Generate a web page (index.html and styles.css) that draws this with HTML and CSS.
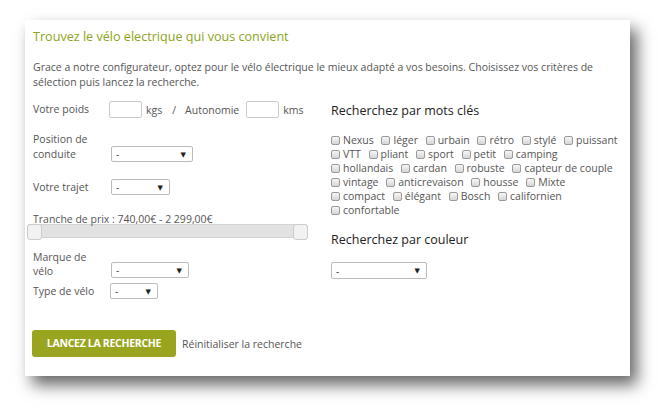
FILE: index.html
```html
<!DOCTYPE html>
<html lang="fr">
<head>
<meta charset="utf-8">
<link rel="stylesheet" href="styles.css">
</head>
<body>
<div class="card">
  <h1 class="title">Trouvez le vélo electrique qui vous convient</h1>
  <p class="intro">Grace a notre configurateur, optez pour le vélo électrique le mieux adapté a vos besoins. Choisissez vos critères de sélection puis lancez la recherche.</p>
  <div class="cols">
    <div class="left">
      <div class="row row-poids">
        <span class="label">Votre poids</span>
        <span class="input"></span><span class="unit">kgs</span>
        <span class="slash">/</span>
        <span class="auto">Autonomie</span>
        <span class="input"></span><span class="unit">kms</span>
      </div>
      <div class="row row-pos">
        <span class="label">Position de<br>conduite</span>
        <span class="select w82"><span>-</span><span class="arrow">▼</span></span>
      </div>
      <div class="row row-trajet">
        <span class="label">Votre trajet</span>
        <span class="select w59"><span>-</span><span class="arrow">▼</span></span>
      </div>
      <div class="price">Tranche de prix : 740,00€ - 2 299,00€</div>
      <div class="slider"><span class="handle"></span><span class="handle"></span></div>
      <div class="row row-marque">
        <span class="label lh14">Marque de<br>vélo</span>
        <span class="select w78"><span>-</span><span class="arrow">▼</span></span>
      </div>
      <div class="row row-type">
        <span class="label">Type de vélo</span>
        <span class="select w48"><span>-</span><span class="arrow">▼</span></span>
      </div>
      <div class="actions">
        <span class="btn">LANCEZ LA RECHERCHE</span>
        <span class="reset">Réinitialiser la recherche</span>
      </div>
    </div>
    <div class="right">
      <h2 class="sub">Recherchez par mots clés</h2>
      <div class="tags">
        <span class="tag"><i class="cb"></i>Nexus</span>
        <span class="tag"><i class="cb"></i>léger</span>
        <span class="tag"><i class="cb"></i>urbain</span>
        <span class="tag"><i class="cb"></i>rétro</span>
        <span class="tag"><i class="cb"></i>stylé</span>
        <span class="tag"><i class="cb"></i>puissant</span>
        <span class="tag"><i class="cb"></i>VTT</span>
        <span class="tag"><i class="cb"></i>pliant</span>
        <span class="tag"><i class="cb"></i>sport</span>
        <span class="tag"><i class="cb"></i>petit</span>
        <span class="tag"><i class="cb"></i>camping</span>
        <span class="tag"><i class="cb"></i>hollandais</span>
        <span class="tag"><i class="cb"></i>cardan</span>
        <span class="tag"><i class="cb"></i>robuste</span>
        <span class="tag"><i class="cb"></i>capteur de couple</span>
        <span class="tag"><i class="cb"></i>vintage</span>
        <span class="tag"><i class="cb"></i>anticrevaison</span>
        <span class="tag"><i class="cb"></i>housse</span>
        <span class="tag"><i class="cb"></i>Mixte</span>
        <span class="tag"><i class="cb"></i>compact</span>
        <span class="tag"><i class="cb"></i>élégant</span>
        <span class="tag"><i class="cb"></i>Bosch</span>
        <span class="tag"><i class="cb"></i>californien</span>
        <span class="tag"><i class="cb"></i>confortable</span>
      </div>
      <h2 class="sub sub2">Recherchez par couleur</h2>
      <span class="select w95"><span>-</span><span class="arrow">▼</span></span>
    </div>
  </div>
</div>
</body>
</html>
```

FILE: styles.css
```css
html, body {
  margin: 0;
  padding: 0;
  background: #ffffff;
}

body {
  font-family: "Open Sans", "DejaVu Sans", sans-serif;
  font-size: 10.5px;
  color: #555555;
  width: 668px;
  height: 412px;
  overflow: hidden;
}

.card {
  margin: 20px 0 0 25px;
  width: 605px;
  height: 356px;
  box-sizing: border-box;
  padding: 9px 8px 0 8px;
  background: #ffffff;
  box-shadow: 7px 9px 15px rgba(0, 0, 0, 0.6);
}

.title {
  margin: 0;
  font-size: 12.6px;
  line-height: 16px;
  font-weight: 400;
  color: #8ca31a;
}

.intro {
  margin: 15px 0 0 0;
  line-height: 15px;
}

.cols {
  display: flex;
  margin-top: 11px;
}

.left {
  width: 298px;
  flex: none;
}

.right {
  flex: 1;
}

.row {
  display: flex;
  align-items: center;
}

.label {
  width: 78px;
  flex: none;
  line-height: 15px;
}

.lh14 {
  line-height: 14px;
}

.row-poids {
  height: 17px;
}

.input {
  width: 31px;
  height: 15px;
  border: 1px solid #cccccc;
  border-radius: 2px;
  margin-left: -2px;
}

.row-poids .input + .unit {
  margin-left: 4px;
}

.auto + .input {
  margin-left: 7px;
}

.slash {
  margin: 0 9px 0 10px;
}

.row-pos {
  align-items: flex-end;
  margin-top: 14px;
}

.row-trajet {
  margin-top: 17px;
}

.select {
  display: flex;
  justify-content: space-between;
  align-items: center;
  box-sizing: border-box;
  height: 16px;
  padding: 0 6px 0 4px;
  border: 1px solid #bbbbbb;
  border-radius: 2px;
  font-size: 10px;
  color: #444444;
  background: #ffffff;
}

.arrow {
  font-size: 7px;
  color: #222222;
}

.w82 { width: 82px; }
.w59 { width: 59px; }
.w78 { width: 78px; }
.w48 { width: 48px; }
.w95 { width: 96px; height: 17px; }

.price {
  margin-top: 17px;
  line-height: 15px;
}

.slider {
  margin: -3px 0 0 -6px;
  width: 281px;
  box-sizing: border-box;
  display: flex;
  justify-content: space-between;
  background: #e2e2e2;
  border: 1px solid #d4d4d4;
  border-radius: 3px;
  height: 14px;
}

.handle {
  width: 13px;
  margin: -1px;
  height: 14px;
  background: #f2f2f2;
  border: 1px solid #cccccc;
  border-radius: 3px;
}

.row-marque {
  align-items: flex-end;
  margin-top: 12px;
}

.row-type {
  margin-top: 5px;
}

.row-type .select {
  margin-left: -1px;
}

.actions {
  display: flex;
  align-items: center;
  margin-top: 31px;
}

.btn {
  display: inline-block;
  width: 144px;
  height: 27px;
  line-height: 27px;
  box-sizing: border-box;
  text-align: center;
  margin-left: -1px;
  background: #9aa51f;
  color: #ffffff;
  font-weight: 700;
  font-size: 10.5px;
  letter-spacing: -0.3px;
  border-radius: 3px;
}

.reset {
  margin-left: 6px;
}

.sub {
  margin: 1px 0 0 0;
  font-size: 12.5px;
  line-height: 17px;
  font-weight: 400;
  color: #222222;
}

.tags {
  margin-top: 14px;
  width: 292px;
  line-height: 14px;
  font-size: 10.5px;
}

.tag {
  display: inline-block;
  margin-right: 5px;
  white-space: nowrap;
}

.cb {
  display: inline-block;
  width: 7px;
  height: 7px;
  margin-right: 3px;
  border: 1px solid #9a9a9a;
  border-radius: 2px;
  background: linear-gradient(#f6f6f6, #d6d6d6);
  vertical-align: -1px;
}

.sub2 {
  margin-top: 14px;
  margin-bottom: 14px;
}
```
